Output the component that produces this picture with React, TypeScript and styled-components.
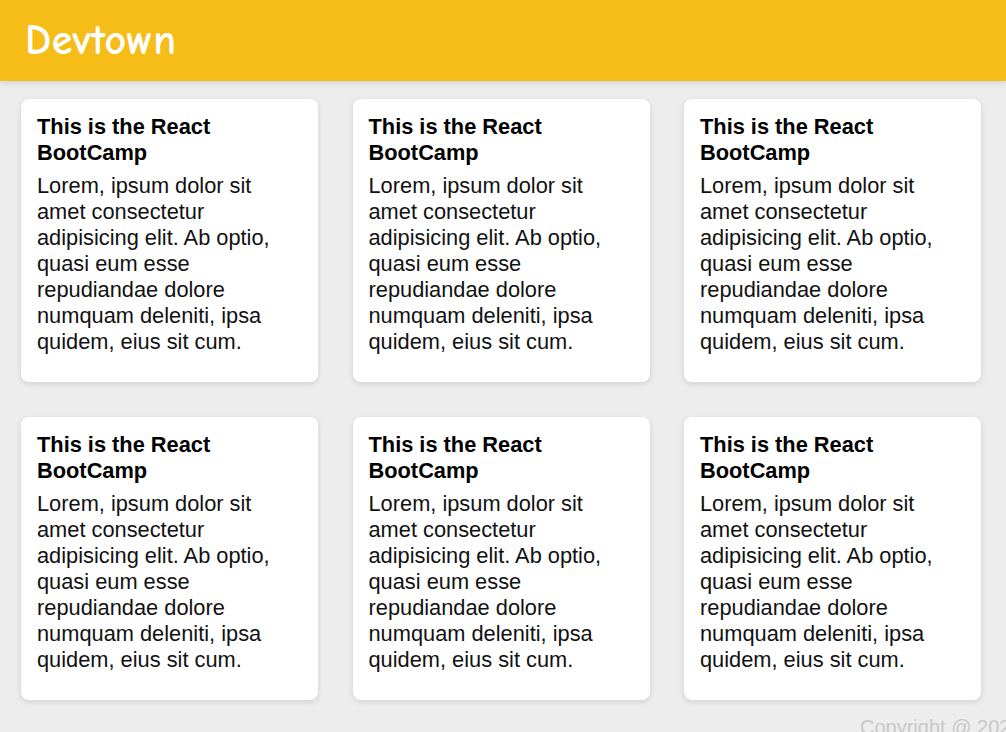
import React from "react";
import styled, { createGlobalStyle } from "styled-components";

const Global = createGlobalStyle`
  html, body { margin: 0; padding: 0; }
  body {
    background: #ededed;
    font-family: "Liberation Sans", Arial, sans-serif;
    overflow-x: hidden;
  }
`;

const Header = styled.header`
  height: 81px;
  background: #f6bc18;
  display: flex;
  align-items: center;
  padding-left: 25px;
  box-shadow: 0 2px 6px rgba(0,0,0,0.12);
`;

const Logo = styled.h1`
  margin: 0;
  color: #fff;
  font-family: "Comic Sans MS", "Comic Neue", cursive;
  font-weight: 700;
  font-size: 42px;
  letter-spacing: 0.5px;
`;

const Grid = styled.main`
  display: grid;
  grid-template-columns: repeat(3, 297px);
  column-gap: 34.5px;
  row-gap: 35px;
  padding: 18px 0 0 21px;
`;

const Card = styled.article`
  background: #fff;
  border-radius: 8px;
  box-shadow: 0 2px 6px rgba(0,0,0,0.12);
  padding: 15px 16px 27px;
`;

const Title = styled.h2`
  margin: 0 0 7px;
  font-size: 21.8px;
  line-height: 26px;
  font-weight: 700;
  color: #000;
`;

const Body = styled.p`
  margin: 0;
  font-size: 21.8px;
  line-height: 26px;
  color: #111;
`;

const Footer = styled.footer`
  display: flex;
  padding: 16px 0 0 860px;
  white-space: nowrap;
`;

const Copy = styled.span`
  color: #c8c8c8;
  font-size: 20px;
`;

const text =
  "Lorem, ipsum dolor sit amet consectetur adipisicing elit. Ab optio, quasi eum esse repudiandae dolore numquam deleniti, ipsa quidem, eius sit cum.";

export default function App() {
  return (
    <>
      <Global />
      <Header>
        <Logo>Devtown</Logo>
      </Header>
      <Grid>
        {Array.from({ length: 6 }).map((_, i) => (
          <Card key={i}>
            <Title>This is the React BootCamp</Title>
            <Body>{text}</Body>
          </Card>
        ))}
      </Grid>
      <Footer>
        <Copy>Copyright @ 2023 Devtown. All rights reserved.</Copy>
      </Footer>
    </>
  );
}
